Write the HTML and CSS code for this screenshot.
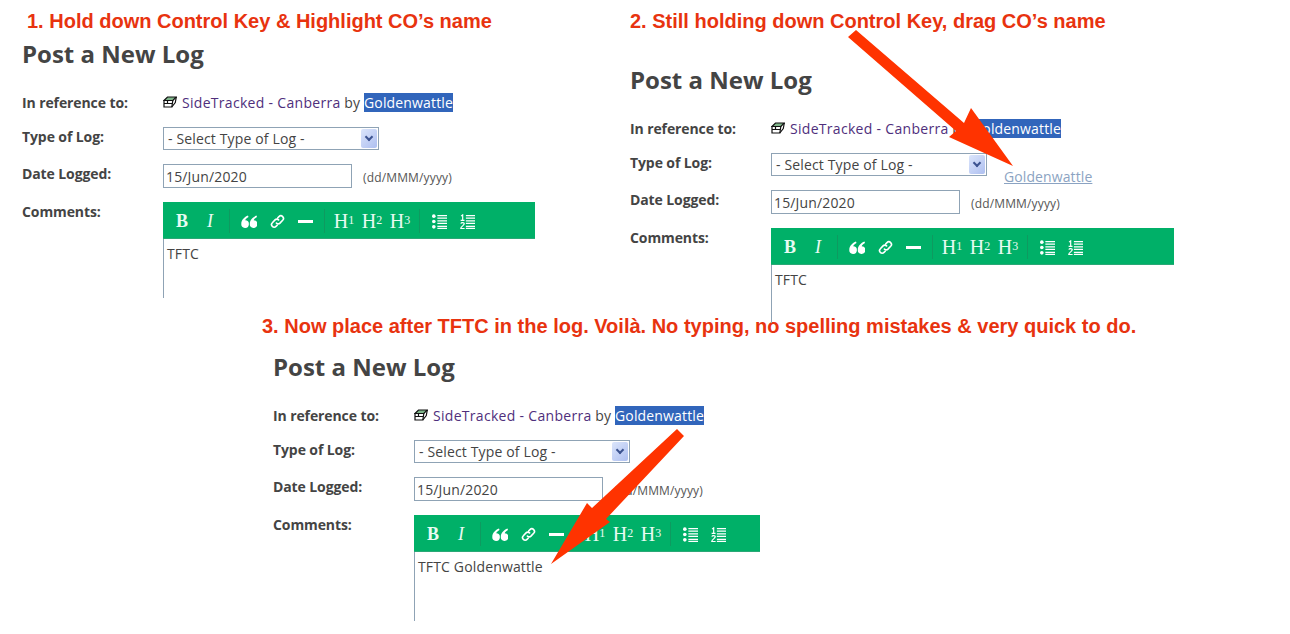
FILE: index.html
```html
<!DOCTYPE html>
<html lang="en">
<head>
  <meta charset="UTF-8">
  <meta name="viewport" content="width=device-width, initial-scale=1.0">
  <title>Post a New Log</title>
  <link rel="stylesheet" href="styles.css">
</head>
<body>
  <svg width="0" height="0" class="defs">
    <symbol id="icon-cache" viewBox="0 0 14 12">
      <path d="M1 4.500L4.500 1H13.300L9.800 4.500z" fill="#7fb58a" stroke="#111" stroke-width="1.200"/>
      <path d="M1 4.500h8.800L8.800 11H1z" fill="#fff" stroke="#111" stroke-width="1.200"/>
      <path d="M13.300 1l-1 5.500L8.800 11M1 7.500h8.300M4.500 4.500v3" fill="none" stroke="#111" stroke-width="1.200"/>
    </symbol>
    <symbol id="icon-quote" viewBox="0 0 16 13">
      <path d="M7 .5C3.500 2 .3 4.800 .3 8.800a3.800 3.800 0 1 0 3.900-3.500C4.700 3.900 5.900 2.800 7.500 2zM15.500 .5c-3.500 1.500-6.700 4.300-6.700 8.300a3.800 3.800 0 1 0 3.900-3.500c.5-1.400 1.700-2.500 3.300-3.300z" fill="#fff"/>
    </symbol>
    <symbol id="icon-link" viewBox="0 0 14 14">
      <path d="M6 8.500a2.300 2.300 0 0 0 3.300 0l2.500-2.700a2.400 2.400 0 0 0-3.400-3.400L7.300 3.500M8 5.500a2.300 2.300 0 0 0-3.300 0L2.200 8.200a2.400 2.400 0 0 0 3.400 3.400l1.100-1.100" fill="none" stroke="#fff" stroke-width="1.500" stroke-linecap="round"/>
    </symbol>
    <symbol id="icon-ul" viewBox="0 0 14 14">
      <circle cx="1.700" cy="2" r="1.700" fill="#fff"/>
      <circle cx="1.700" cy="7" r="1.700" fill="#fff"/>
      <circle cx="1.700" cy="12" r="1.700" fill="#fff"/>
      <path d="M5 1.500h9M5 3.800h9M5 6.500h9M5 8.800h9M5 11.500h9M5 13.500h9" stroke="#fff" stroke-width="1.200"/>
    </symbol>
    <symbol id="icon-ol" viewBox="0 0 14 14">
      <path d="M1 2l1.500-1.200V6M.6 6h3.600M.8 9c.4-1.400 3.200-1.300 3.200.2 0 1.400-3.200 2.500-3.300 4.300H4.300" fill="none" stroke="#fff" stroke-width="1.100"/>
      <path d="M5.500 1.500h8.500M5.500 3.800h8.500M5.500 6.500h8.500M5.500 8.800h8.500M5.500 11.500h8.500M5.500 13.500h8.500" stroke="#fff" stroke-width="1.200"/>
    </symbol>
  </svg>

  <p class="caption caption-one">1. Hold down Control Key &amp; Highlight CO’s name</p>
  <p class="caption caption-two">2. Still holding down Control Key, drag CO’s name</p>
  <p class="caption caption-three">3. Now place after TFTC in the log. Voilà. No typing, no spelling mistakes &amp; very quick to do.</p>

  <section class="log-panel panel-one">
    <h2>Post a New Log</h2>
    <div class="log-form">
      <div class="form-label">In reference to:</div>
      <div class="form-value"><svg class="cache-icon"><use href="#icon-cache"/></svg><a class="cache-link">SideTracked - Canberra</a> by <span class="selected">Goldenwattle</span></div>
      <div class="form-label">Type of Log:</div>
      <div class="form-value"><div class="fake-select">- Select Type of Log -<span class="select-btn"></span></div></div>
      <div class="form-label">Date Logged:</div>
      <div class="form-value date-row"><div class="date-input">15/Jun/2020</div><span class="date-hint">(dd/MMM/yyyy)</span></div>
      <div class="form-label comments-label">Comments:</div>
      <div class="form-value">
        <div class="toolbar">
          <span class="tool tool-b">B</span><span class="tool tool-i">I</span><span class="sep"></span>
          <span class="tool"><svg class="ic-quote"><use href="#icon-quote"/></svg></span><span class="tool"><svg class="ic-link"><use href="#icon-link"/></svg></span><span class="tool"><span class="hr-icon"></span></span><span class="sep"></span>
          <span class="tool tool-h">H<small>1</small></span><span class="tool tool-h">H<small>2</small></span><span class="tool tool-h">H<small>3</small></span><span class="sep"></span>
          <span class="tool"><svg class="ic-list"><use href="#icon-ul"/></svg></span><span class="tool"><svg class="ic-list"><use href="#icon-ol"/></svg></span>
        </div>
        <div class="editor">TFTC</div>
      </div>
    </div>
  </section>

  <section class="log-panel panel-two">
    <h2>Post a New Log</h2>
    <div class="log-form">
      <div class="form-label">In reference to:</div>
      <div class="form-value"><svg class="cache-icon"><use href="#icon-cache"/></svg><a class="cache-link">SideTracked - Canberra</a> by <span class="selected">Goldenwattle</span></div>
      <div class="form-label">Type of Log:</div>
      <div class="form-value"><div class="fake-select">- Select Type of Log -<span class="select-btn"></span></div></div>
      <div class="form-label">Date Logged:</div>
      <div class="form-value date-row"><div class="date-input">15/Jun/2020</div><span class="date-hint">(dd/MMM/yyyy)</span></div>
      <div class="form-label comments-label">Comments:</div>
      <div class="form-value">
        <div class="toolbar">
          <span class="tool tool-b">B</span><span class="tool tool-i">I</span><span class="sep"></span>
          <span class="tool"><svg class="ic-quote"><use href="#icon-quote"/></svg></span><span class="tool"><svg class="ic-link"><use href="#icon-link"/></svg></span><span class="tool"><span class="hr-icon"></span></span><span class="sep"></span>
          <span class="tool tool-h">H<small>1</small></span><span class="tool tool-h">H<small>2</small></span><span class="tool tool-h">H<small>3</small></span><span class="sep"></span>
          <span class="tool"><svg class="ic-list"><use href="#icon-ul"/></svg></span><span class="tool"><svg class="ic-list"><use href="#icon-ol"/></svg></span>
        </div>
        <div class="editor">TFTC</div>
      </div>
    </div>
  </section>

  <section class="log-panel panel-three">
    <h2>Post a New Log</h2>
    <div class="log-form">
      <div class="form-label">In reference to:</div>
      <div class="form-value"><svg class="cache-icon"><use href="#icon-cache"/></svg><a class="cache-link">SideTracked - Canberra</a> by <span class="selected">Goldenwattle</span></div>
      <div class="form-label">Type of Log:</div>
      <div class="form-value"><div class="fake-select">- Select Type of Log -<span class="select-btn"></span></div></div>
      <div class="form-label">Date Logged:</div>
      <div class="form-value date-row"><div class="date-input">15/Jun/2020</div><span class="date-hint">(dd/MMM/yyyy)</span></div>
      <div class="form-label comments-label">Comments:</div>
      <div class="form-value">
        <div class="toolbar">
          <span class="tool tool-b">B</span><span class="tool tool-i">I</span><span class="sep"></span>
          <span class="tool"><svg class="ic-quote"><use href="#icon-quote"/></svg></span><span class="tool"><svg class="ic-link"><use href="#icon-link"/></svg></span><span class="tool"><span class="hr-icon"></span></span><span class="sep"></span>
          <span class="tool tool-h">H<small>1</small></span><span class="tool tool-h">H<small>2</small></span><span class="tool tool-h">H<small>3</small></span><span class="sep"></span>
          <span class="tool"><svg class="ic-list"><use href="#icon-ul"/></svg></span><span class="tool"><svg class="ic-list"><use href="#icon-ol"/></svg></span>
        </div>
        <div class="editor">TFTC Goldenwattle</div>
      </div>
    </div>
  </section>

  <a class="dragged-name">Goldenwattle</a>

  <svg class="arrows" viewBox="0 0 1290 634">
    <polygon points="856,30 848,37 956,131 949,137 1013,166 971,108 964,123"/>
    <polygon points="677,429 684,436 606,519 610,522 551,564 587,503 592,508"/>
  </svg>
</body>
</html>
```

FILE: styles.css
```css
body {
  margin: 0;
  height: 634px;
  position: relative;
  overflow: hidden;
  background: #fff;
  font-family: 'Open Sans', 'Noto Sans', sans-serif;
  color: #444;
}

.defs {
  position: absolute;
}

/* the picture is three pasted screenshots, so each one sits freely on the canvas */
.caption {
  position: absolute;
  margin: 0;
  font-family: 'Liberation Sans', Arial, sans-serif;
  font-weight: bold;
  font-size: 20px;
  line-height: 24px;
  color: #e8330f;
  white-space: nowrap;
}

.caption-one {
  left: 27px;
  top: 9px;
}

.caption-two {
  left: 630px;
  top: 9px;
}

.caption-three {
  left: 262px;
  top: 314px;
}

.log-panel {
  position: absolute;
  width: 640px;
}

.panel-one {
  left: 22px;
  top: 37px;
  --toolbar-width: 372px;
  --editor-height: 59px;
}

.panel-two {
  left: 630px;
  top: 63px;
  --toolbar-width: 403px;
  --editor-height: 58px;
}

.panel-three {
  left: 273px;
  top: 350px;
  --toolbar-width: 346px;
  --editor-height: 69px;
}

h2 {
  margin: 0 0 23px;
  font-size: 24px;
  line-height: 33px;
  font-weight: bold;
  color: #444;
}

.log-form {
  display: grid;
  grid-template-columns: 141px 1fr;
}

.form-label {
  font-size: 14px;
  line-height: 19px;
  font-weight: bold;
  letter-spacing: -0.1px;
  color: #444;
}

.comments-label {
  padding-top: 1px;
}

.form-value {
  font-size: 14px;
  line-height: 19px;
  letter-spacing: 0.15px;
  white-space: nowrap;
  color: #444;
}

.form-label:nth-child(1),
.form-value:nth-child(2) {
  height: 34px;
}

.form-label:nth-child(3),
.form-value:nth-child(4) {
  height: 37px;
}

.form-label:nth-child(5),
.form-value:nth-child(6) {
  height: 37px;
}

.cache-icon {
  width: 14px;
  height: 12px;
  margin-right: 5px;
}

.cache-link {
  color: #4f2f7c;
  letter-spacing: 0.3px;
}

.selected {
  background: #3165bb;
  color: #fff;
}

.fake-select {
  box-sizing: border-box;
  width: 216px;
  height: 23px;
  padding: 1px 4px 0;
  border: 1px solid #8fa3b5;
  position: relative;
}

.select-btn {
  position: absolute;
  right: 1px;
  top: 1px;
  width: 16px;
  height: 19px;
  border-radius: 2px;
  background: linear-gradient(135deg, #dbe5fb, #aebff0);
}

.select-btn::after {
  content: "";
  position: absolute;
  left: 5px;
  top: 5px;
  width: 4px;
  height: 4px;
  border-right: 2px solid #3c5390;
  border-bottom: 2px solid #3c5390;
  transform: rotate(45deg);
}

.date-row {
  display: flex;
  align-items: flex-start;
}

.date-input {
  box-sizing: border-box;
  width: 189px;
  height: 24px;
  padding: 2px 2px 0;
  border: 1px solid #8fa3b5;
}

.date-hint {
  margin: 4px 0 0 11px;
  font-size: 12px;
  color: #555;
}

.toolbar {
  display: flex;
  align-items: center;
  box-sizing: border-box;
  width: var(--toolbar-width);
  height: 37px;
  margin-top: 1px;
  padding: 2px 0 0 5px;
  background: #00b068;
  border-bottom: 1px solid #2aa876;
}

.tool {
  display: flex;
  justify-content: center;
  align-items: center;
  width: 28px;
  height: 28px;
  color: #e9fbf3;
  font-family: 'Liberation Serif', 'Times New Roman', serif;
  font-size: 18px;
  letter-spacing: 0;
}

.tool-b {
  font-weight: bold;
}

.tool-i {
  font-style: italic;
}

.tool-h {
  font-size: 20px;
}

.tool small {
  font-size: 12px;
  margin-top: -2px;
}

.sep {
  width: 1px;
  height: 24px;
  margin: 0 5px;
  background: #0e9a60;
}

.ic-quote {
  width: 16px;
  height: 13px;
}

.ic-link {
  width: 15px;
  height: 15px;
}

.ic-list {
  width: 15px;
  height: 15px;
}

.hr-icon {
  display: block;
  width: 15px;
  height: 3px;
  background: #fff;
}

.editor {
  box-sizing: border-box;
  height: var(--editor-height);
  padding: 5px 3px 0;
  border-left: 1px solid #8fa3b5;
}

.dragged-name {
  position: absolute;
  left: 1004px;
  top: 167px;
  font-size: 14px;
  line-height: 19px;
  letter-spacing: 0.1px;
  color: #8ba3c2;
  text-decoration: underline;
}

.arrows {
  position: absolute;
  left: 0;
  top: 0;
  width: 1290px;
  height: 634px;
  fill: #ff3300;
}
```
